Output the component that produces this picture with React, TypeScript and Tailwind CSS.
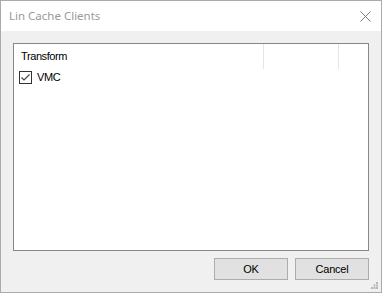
const TITLE_FONT = { fontFamily: '"Segoe UI", "Noto Sans", "Liberation Sans", sans-serif' };
const BODY_FONT = { fontFamily: '"Microsoft Sans Serif", "Liberation Sans", Arial, sans-serif' };

// Tiny 3-step dotted size grip in the bottom-right corner.
function SizeGrip() {
  return (
    <svg width="7" height="7" viewBox="0 0 7 7" className="absolute bottom-[3px] right-[3px]">
      {[
        [5, 0],
        [5, 2.5],
        [2.5, 2.5],
        [5, 5],
        [2.5, 5],
        [0, 5],
      ].map(([x, y], i) => (
        <rect key={i} x={x} y={y} width="2" height="2" fill="#b8b8b8" />
      ))}
    </svg>
  );
}

function CloseGlyph() {
  return (
    <svg width="11" height="11" viewBox="0 0 11 11" className="block">
      <path d="M0.5 0.5 L10.5 10.5 M10.5 0.5 L0.5 10.5" stroke="#7a7a7a" strokeWidth="1" />
    </svg>
  );
}

function CheckMark() {
  return (
    <svg width="11" height="11" viewBox="0 0 11 11" className="block">
      <path d="M1.5 5.5 L4 8 L9.5 2.5" fill="none" stroke="#444444" strokeWidth="1.2" />
    </svg>
  );
}

function DialogButton({ label }: { label: string }) {
  return (
    <button
      type="button"
      className="h-[22px] w-[74px] border border-[#adadad] bg-[#e1e1e1] text-[11px] tracking-[-0.2px] text-black"
      style={BODY_FONT}
    >
      {label}
    </button>
  );
}

export default function App() {
  return (
    <div className="relative flex h-[293px] w-[382px] flex-col border border-[#aaaaaa] bg-[#f0f0f0]">
      {/* title bar */}
      <div className="flex h-[30px] items-center justify-between bg-white pl-[8px] pr-[10px]">
        <span className="text-[11.5px] text-[#999999]" style={TITLE_FONT}>
          Lin Cache Clients
        </span>
        <CloseGlyph />
      </div>

      {/* list view */}
      <div
        className="mx-[12px] mt-[12px] flex h-[208px] flex-col border border-[#828790] bg-white text-[11px] tracking-[-0.4px] text-black"
        style={BODY_FONT}
      >
        <div className="flex h-[25px] items-center">
          <div className="flex h-full w-[250px] items-center border-r border-[#e5e5e5] pl-[7px]">
            Transform
          </div>
          <div className="h-full w-[75px] border-r border-[#e5e5e5]" />
        </div>
        <div className="mt-[2px] flex h-[13px] items-center gap-[5px] pl-[5px] leading-none">
          <span className="flex h-[13px] w-[13px] items-center justify-center border border-[#333333] bg-white">
            <CheckMark />
          </span>
          <span>VMC</span>
        </div>
      </div>

      {/* buttons */}
      <div className="mr-[12px] mt-[7px] flex justify-end gap-[7px]">
        <DialogButton label="OK" />
        <DialogButton label="Cancel" />
      </div>

      <SizeGrip />
    </div>
  );
}
